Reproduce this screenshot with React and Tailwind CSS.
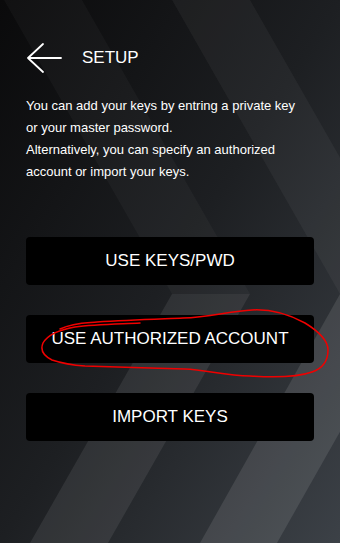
import React from "react";

const font = { fontFamily: '"Liberation Sans", Arial, sans-serif' };

// chevron bands drawn behind the page
const Backdrop = () => (
  <svg
    className="absolute inset-0 h-full w-full"
    viewBox="0 0 340 543"
    preserveAspectRatio="none"
  >
    {/* upper halves */}
    <polygon points="4,0 82,0 250,294 172,294" fill="#ffffff" fillOpacity="0.03" />
    <polygon points="172,0 250,0 418,294 340,294" fill="#ffffff" fillOpacity="0.045" />
    {/* lower halves */}
    <polygon points="172,294 250,294 108,543 30,543" fill="#ffffff" fillOpacity="0.08" />
    <polygon points="340,294 418,294 277,543 200,543" fill="#ffffff" fillOpacity="0.1" />
  </svg>
);

const ArrowLeft = () => (
  <svg width="36" height="30" viewBox="0 0 36 30" fill="none">
    <path
      d="M35 15H2M17 1L2 15l15 14"
      stroke="#ffffff"
      strokeWidth="1.8"
      strokeLinecap="round"
      strokeLinejoin="round"
    />
  </svg>
);

const Scribble = () => (
  <svg
    className="pointer-events-none absolute left-0 top-0"
    width="340"
    height="543"
    viewBox="0 0 340 543"
    fill="none"
  >
    <path
      d="M60 329 C75 322 90 323 97 322 C130 320 160 319 183 318 C210 317 230 311 252 310 C270 309 290 315 305 323 C318 331 328 340 328 350 C328 360 324 368 312 372 C298 377 280 378 250 376 C225 375 205 370 185 369 C150 368 110 367 85 366 C70 365 58 362 52 360 C44 356 40 350 43 343 C47 336 58 330 75 327 C95 324 120 324 140 323"
      stroke="#f00000"
      strokeWidth="1.5"
      strokeLinecap="round"
    />
  </svg>
);

const OptionButton = ({ label }) => (
  <button
    type="button"
    className="flex h-12 w-full items-center justify-center rounded bg-black text-[17px] text-white"
    style={font}
  >
    {label}
  </button>
);

export default function App() {
  return (
    <div
      className="relative h-[543px] w-full overflow-hidden bg-linear-to-br from-[#0a0a0b] via-[#1d1f22] to-[#3c4147]"
      style={font}
    >
      <Backdrop />

      <div className="relative flex flex-col px-[26px] pt-[43px]">
        <div className="flex items-center gap-5">
          <ArrowLeft />
          <h1 className="text-[17px] text-white">SETUP</h1>
        </div>

        <p className="mt-[22px] w-[282px] text-[13px] leading-[22px] text-white">
          You can add your keys by entring a private key or your master password.
          <br />
          Alternatively, you can specify an authorized account or import your keys.
        </p>

        <div className="mt-[54px] flex flex-col gap-[30px]">
          <OptionButton label="USE KEYS/PWD" />
          <OptionButton label="USE AUTHORIZED ACCOUNT" />
          <OptionButton label="IMPORT KEYS" />
        </div>
      </div>

      <Scribble />
    </div>
  );
}
